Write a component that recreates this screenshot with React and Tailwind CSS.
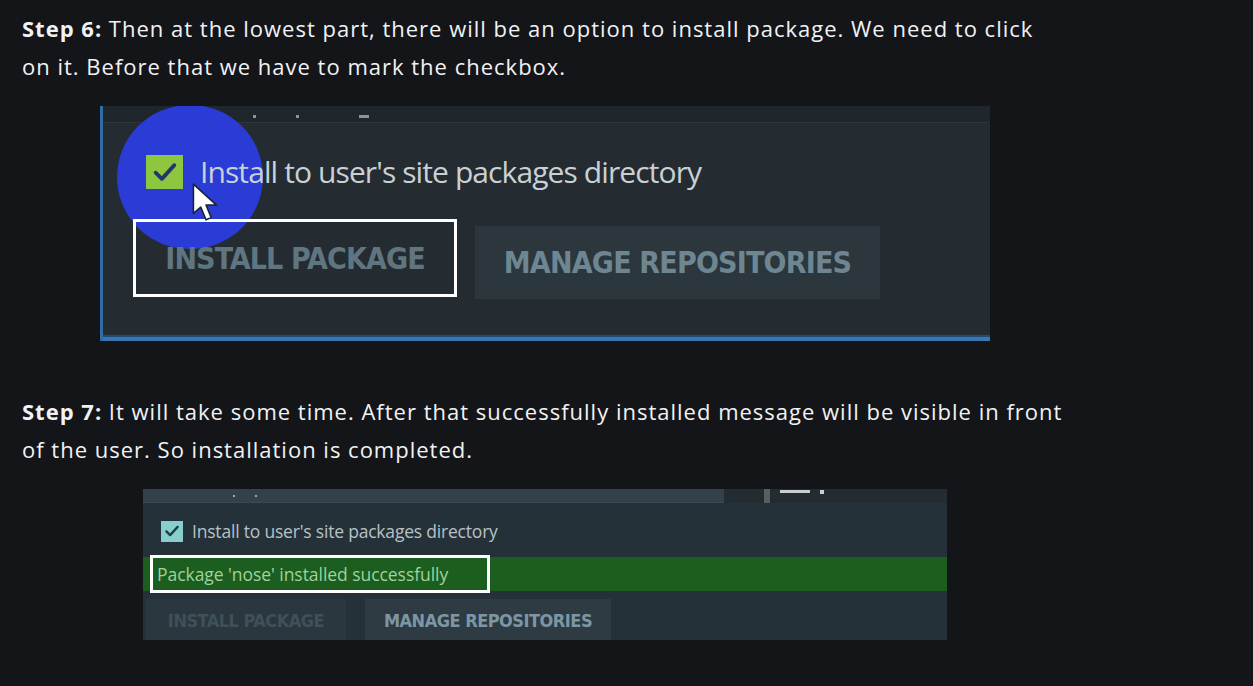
import React from 'react';

// --- Small drawn bits ---
function CheckIcon({ className, stroke }) {
  return (
    <svg viewBox="0 0 24 24" className={className}>
      <path d="M4.5 12.5 L9.5 17.5 L19.5 6.5" fill="none" stroke={stroke} strokeWidth="3" strokeLinecap="round" strokeLinejoin="round" />
    </svg>
  );
}

function Cursor() {
  return (
    <svg viewBox="0 0 28 42" className="absolute left-[88px] top-[76px] w-[30px] h-[44px]">
      <path d="M2 2 L2 30 L9 24 L14 36 L19 34 L14 22 L24 22 Z" fill="#ffffff" stroke="#1b2230" strokeWidth="1.5" strokeLinejoin="round" />
    </svg>
  );
}

function StepOneShot() {
  return (
    <div className="relative w-[890px] h-[235px] bg-[#242c32] overflow-hidden border-l-[3px] border-[#2f6ea5] mx-auto">
      {/* top strip (cut off list above) */}
      <div className="h-[17px] bg-[#20272c] border-b border-[#2c353b] flex items-end pb-[4px] pl-[150px] gap-[40px]">
        <div className="w-[3px] h-[3px] bg-[#8a959b]" />
        <div className="w-[3px] h-[3px] bg-[#8a959b]" />
        <div className="w-[10px] h-[3px] bg-[#8a959b] ml-[20px]" />
      </div>

      {/* blue highlight circle */}
      <div className="absolute left-[14px] top-[-1px] w-[146px] h-[144px] rounded-full bg-[#2a3bd6]" />

      <div className="relative flex items-center pl-[43px] pt-[29px] gap-[17px]">
        <div className="w-[37px] h-[34px] bg-[#8dc63f] flex items-center justify-center">
          <CheckIcon className="w-[30px] h-[30px]" stroke="#233670" />
        </div>
        <span className="text-[30px] leading-[40px] text-[#c9d1d5] font-['Open_Sans',sans-serif] tracking-[-0.9px]">Install to user's site packages directory</span>
      </div>

      <div className="relative flex items-start pl-[30px] pt-[27px] gap-[18px]">
        <div className="w-[324px] h-[78px] border-[3px] border-white flex items-center justify-center">
          <span className="text-[30px] font-bold text-[#5f7681] font-['DejaVu_Sans_Condensed','Liberation_Sans_Narrow',sans-serif] tracking-[-0.9px]">INSTALL PACKAGE</span>
        </div>
        <div className="mt-[7px] w-[405px] h-[73px] bg-[#2b363d] flex items-center justify-center">
          <span className="text-[30px] font-bold text-[#6e8692] font-['DejaVu_Sans_Condensed','Liberation_Sans_Narrow',sans-serif] tracking-[-0.8px]">MANAGE REPOSITORIES</span>
        </div>
      </div>

      <Cursor />

      {/* bottom blue edge */}
      <div className="absolute left-0 right-0 bottom-0 h-[6px] bg-[#3a77ae] border-t-[2px] border-[#1d4c78]" />
    </div>
  );
}

function StepTwoShot() {
  return (
    <div className="w-[804px] h-[151px] bg-[#253138] mx-auto overflow-hidden font-['Open_Sans',sans-serif]">
      <div className="h-[14px] flex">
        <div className="w-[581px] bg-[#33424a] border-b border-[#3b4a52] flex items-center pl-[90px] gap-[20px]">
          <div className="w-[2px] h-[2px] bg-[#9aa6ab]" />
          <div className="w-[2px] h-[2px] bg-[#9aa6ab]" />
        </div>
        <div className="flex-1 bg-[#222c31] flex items-start pl-[40px] gap-[10px]">
          <div className="w-[6px] h-[14px] bg-[#55605f]" />
          <div className="w-[30px] h-[3px] bg-[#c9ced0] mt-[1px]" />
          <div className="w-[4px] h-[4px] bg-[#c9ced0] mt-[1px]" />
        </div>
      </div>

      <div className="flex items-center pl-[18px] pt-[17px] gap-[9px]">
        <div className="w-[22px] h-[21px] bg-[#86cfcd] flex items-center justify-center">
          <CheckIcon className="w-[18px] h-[18px]" stroke="#1f3d46" />
        </div>
        <span className="text-[17.5px] leading-[22px] text-[#b7c1c5] tracking-[-0.2px]">Install to user's site packages directory</span>
      </div>

      <div className="mt-[15px] h-[34px] bg-[#1b5e20] flex items-center">
        <div className="ml-[7px] w-[340px] h-[38px] border-[3px] border-white flex items-center pl-[4px]">
          <span className="text-[17.5px] text-[#9fd39a] tracking-[-0.05px]">Package 'nose' installed successfully</span>
        </div>
      </div>

      <div className="flex pl-[3px] pt-[8px] gap-[19px]">
        <div className="w-[200px] h-[43px] bg-[#2b373e] flex items-center justify-center">
          <span className="text-[18px] font-bold text-[#3f5059] font-['DejaVu_Sans_Condensed','Liberation_Sans_Narrow',sans-serif] tracking-[-0.5px]">INSTALL PACKAGE</span>
        </div>
        <div className="w-[246px] h-[43px] bg-[#2e3b42] flex items-center justify-center">
          <span className="text-[18px] font-bold text-[#7d96a4] font-['DejaVu_Sans_Condensed','Liberation_Sans_Narrow',sans-serif] tracking-[-0.5px]">MANAGE REPOSITORIES</span>
        </div>
      </div>
    </div>
  );
}

export default function App() {
  return (
    <div className="min-h-screen bg-[#141519] text-[#f1f2f3] font-['Open_Sans','Noto_Sans',sans-serif]">
      <div className="w-[1046px] ml-[22px] pt-[9px]">
        <p className="text-[22px] leading-[38px] tracking-[1px] whitespace-nowrap">
          <strong className="font-bold">Step 6:</strong> Then at the lowest part, there will be an option to install package. We need to click
          <br />
          on it. Before that we have to mark the checkbox.
        </p>
        <div className="mt-[21px]">
          <StepOneShot />
        </div>

        <p className="mt-[51px] text-[22px] leading-[38px] tracking-[1px] whitespace-nowrap">
          <strong className="font-bold">Step 7:</strong> It will take some time. After that successfully installed message will be visible in front
          <br />
          of the user. So installation is completed.
        </p>
        <div className="mt-[21px]">
          <StepTwoShot />
        </div>
      </div>
    </div>
  );
}
